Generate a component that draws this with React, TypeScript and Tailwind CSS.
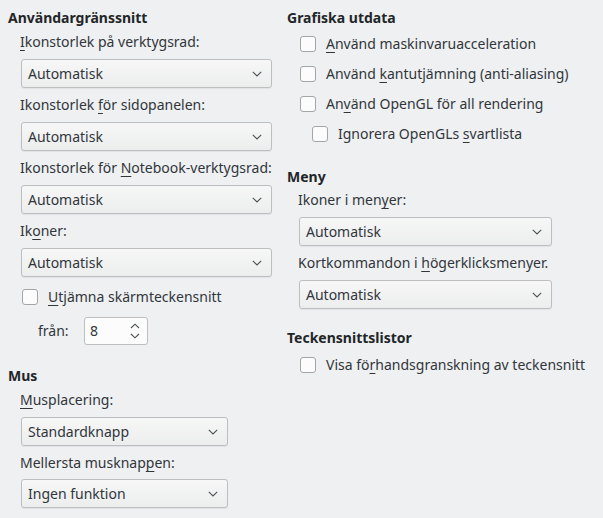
import React from "react";

const text = "text-[#31363b]";

function U({ children }: { children: React.ReactNode }) {
  return <span className="underline decoration-1 underline-offset-[3px]">{children}</span>;
}

function Chevron() {
  return (
    <svg width="10" height="6" viewBox="0 0 10 6" className="shrink-0">
      <path d="M0.8 0.8 L5 5 L9.2 0.8" fill="none" stroke="#4d5257" strokeWidth="1.1" />
    </svg>
  );
}

function Select({ value, className }: { value: string; className: string }) {
  return (
    <div
      className={`h-[29px] flex items-center justify-between pl-[6px] pr-[9px] rounded-[3px] border border-[#bcbebf] bg-gradient-to-b from-[#f7f7f8] to-[#eceded] shadow-[0_1px_1px_rgba(0,0,0,0.06)] ${className}`}
    >
      <span className={text}>{value}</span>
      <Chevron />
    </div>
  );
}

function Check({ children, className = "" }: { children: React.ReactNode; className?: string }) {
  return (
    <div className={`h-5 flex items-center ${className}`}>
      <div className="w-4 h-4 rounded-[3px] border border-[#a3a5a7] bg-[#fcfcfc] shrink-0" />
      <span className={`ml-[10px] ${text} whitespace-nowrap`}>{children}</span>
    </div>
  );
}

function Heading({ children, className = "" }: { children: React.ReactNode; className?: string }) {
  return <div className={`h-5 font-bold text-[#232629] whitespace-nowrap ${className}`}>{children}</div>;
}

function Label({ children, className = "" }: { children: React.ReactNode; className?: string }) {
  return <div className={`h-5 ${text} whitespace-nowrap ${className}`}>{children}</div>;
}

export default function App() {
  return (
    <div
      className="w-[603px] h-[518px] bg-[#eff0f1] flex text-[14px] leading-5 overflow-hidden"
      style={{ fontFamily: '"Noto Sans", "DejaVu Sans", sans-serif' }}
    >
      {/* left column */}
      <div className="w-[279px] pl-2 pt-2 flex flex-col">
        <Heading>Användargränssnitt</Heading>
        <Label className="ml-3 mt-1">
          <U>I</U>konstorlek på verktygsrad:
        </Label>
        <Select value="Automatisk" className="ml-[13px] mt-[7px] w-[251px]" />
        <Label className="ml-3 mt-[7px]">
          Ikonstorlek <U>f</U>ör sidopanelen:
        </Label>
        <Select value="Automatisk" className="ml-[13px] mt-[7px] w-[251px]" />
        <Label className="ml-3 mt-[7px]">
          Ikonstorlek för <U>N</U>otebook-verktygsrad:
        </Label>
        <Select value="Automatisk" className="ml-[13px] mt-[7px] w-[251px]" />
        <Label className="ml-3 mt-[7px]">
          Ik<U>o</U>ner:
        </Label>
        <Select value="Automatisk" className="ml-[13px] mt-[7px] w-[251px]" />
        <Check className="ml-[14px] mt-[10px]">
          <U>U</U>tjämna skärmteckensnitt
        </Check>
        <div className="ml-[30px] mt-[10px] flex items-center">
          <span className={`${text} w-[46px]`}>från:</span>
          <div className="w-[64px] h-[28px] rounded-[3px] border border-[#bcbebf] bg-[#fcfcfc] flex items-center justify-between pl-[5px] pr-[7px]">
            <span className={text}>8</span>
            <svg width="10" height="16" viewBox="0 0 10 16">
              <path d="M1 5 L5 1.2 L9 5" fill="none" stroke="#4d5257" strokeWidth="1.1" />
              <path d="M1 11 L5 14.8 L9 11" fill="none" stroke="#4d5257" strokeWidth="1.1" />
            </svg>
          </div>
        </div>
        <Heading className="mt-[21px]">Mus</Heading>
        <Label className="ml-3 mt-1">
          <U>M</U>usplacering:
        </Label>
        <Select value="Standardknapp" className="ml-[13px] mt-[7px] w-[207px]" />
        <Label className="ml-3 mt-[7px]">
          Mellersta musknap<U>p</U>en:
        </Label>
        <Select value="Ingen funktion" className="ml-[13px] mt-[6px] w-[207px]" />
      </div>

      {/* right column */}
      <div className="flex-1 pl-[8px] pt-2 flex flex-col">
        <Heading>Grafiska utdata</Heading>
        <Check className="ml-[13px] mt-[6px]">
          <U>A</U>nvänd maskinvaruacceleration
        </Check>
        <Check className="ml-[13px] mt-[10px]">
          Använd <U>k</U>antutjämning (anti-aliasing)
        </Check>
        <Check className="ml-[13px] mt-[10px]">
          An<U>v</U>änd OpenGL för all rendering
        </Check>
        <Check className="ml-[25px] mt-[10px]">
          Ignorera OpenGLs <U>s</U>vartlista
        </Check>
        <Heading className="mt-[23px]">Meny</Heading>
        <Label className="ml-[11px] mt-[3px]">
          Ikoner i men<U>y</U>er:
        </Label>
        <Select value="Automatisk" className="ml-[12px] mt-[7px] w-[253px]" />
        <Label className="ml-[11px] mt-[7px]">
          Kortkommandon i <U>h</U>ögerklicksmenyer.
        </Label>
        <Select value="Automatisk" className="ml-[12px] mt-[7px] w-[253px]" />
        <Heading className="mt-[19px]">Teckensnittslistor</Heading>
        <Check className="ml-[13px] mt-[7px]">
          Visa fö<U>r</U>handsgranskning av teckensnitt
        </Check>
      </div>
    </div>
  );
}
